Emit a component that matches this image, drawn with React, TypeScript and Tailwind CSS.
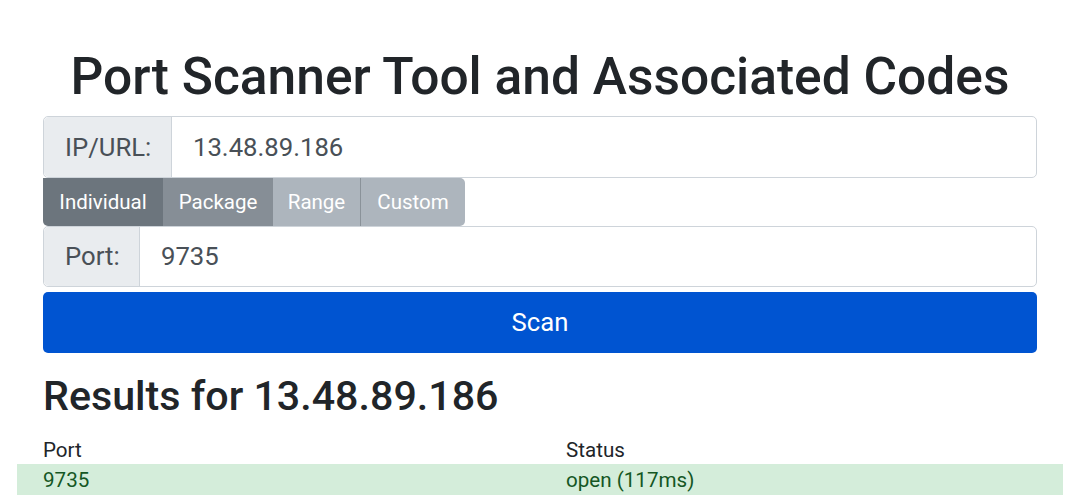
export default function App() {
  return (
    <div className="min-h-screen bg-white text-[#212529]" style={{ fontFamily: 'Roboto, "Liberation Sans", sans-serif' }}>
      <div className="ml-[43px] w-[994px] pt-[46px]">
        <h1 className="text-center text-[51.5px] font-medium leading-[1.2] mb-[8px]">Port Scanner Tool and Associated Codes</h1>

        <div className="flex h-[62px] rounded-[5px] border border-[#ced4da]">
          <span className="flex items-center w-[128px] px-[21px] bg-[#e9ecef] border-r border-[#ced4da] rounded-l-[5px] text-[25.7px] text-[#495057]">IP/URL:</span>
          <div className="flex items-center flex-1 px-[21px] text-[25.7px] text-[#495057]">13.48.89.186</div>
        </div>

        <div className="flex h-[48px] text-[20.5px] text-white">
          <button className="w-[120px] pt-[2px] bg-[#6c757d] rounded-bl-[5px]">Individual</button>
          <button className="w-[110px] pt-[2px] bg-[#868e96]">Package</button>
          <button className="w-[88px] pt-[2px] bg-[#adb5bd] border-r border-[#8a9299]">Range</button>
          <button className="w-[104px] pt-[2px] bg-[#adb5bd] rounded-r-[5px]">Custom</button>
        </div>

        <div className="flex h-[61px] rounded-[5px] border border-[#ced4da]">
          <span className="flex items-center w-[96px] px-[21px] bg-[#e9ecef] border-r border-[#ced4da] rounded-l-[5px] text-[25.7px] text-[#495057]">Port:</span>
          <div className="flex items-center flex-1 px-[21px] text-[25.7px] text-[#495057]">9735</div>
        </div>

        <button className="mt-[5px] w-full h-[61px] rounded-[5px] bg-[#0054d1] text-white text-[25.7px]">Scan</button>

        <h2 className="mt-[19px] text-[41.2px] font-medium leading-[1.2]">Results for 13.48.89.186</h2>

        <div className="mt-[14px] text-[20.6px]">
          <div className="grid grid-cols-[523px_1fr] h-[29px] items-center">
            <span>Port</span>
            <span>Status</span>
          </div>
          <div className="grid grid-cols-[523px_1fr] h-[31px] pt-[1px] items-center -mx-[26px] px-[26px] bg-[#d4edda] text-[#155724]">
            <span>9735</span>
            <span>open (117ms)</span>
          </div>
        </div>
      </div>
    </div>
  );
}
